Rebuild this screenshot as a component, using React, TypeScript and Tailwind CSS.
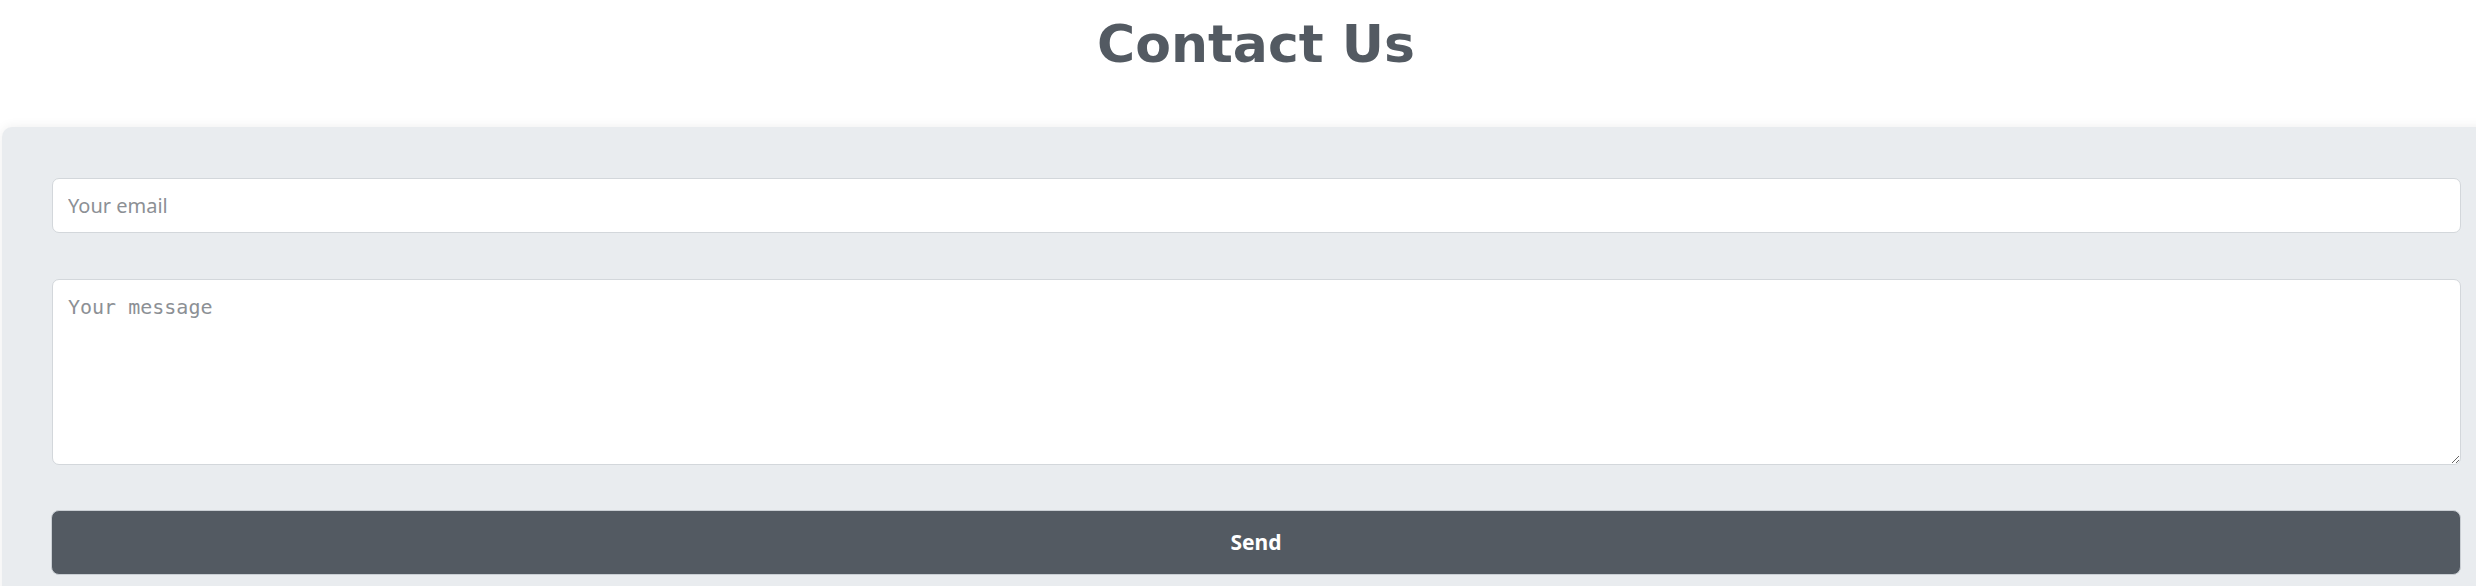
import React, { useState } from "react";

export default function App() {
  const [email, setEmail] = useState("");
  const [message, setMessage] = useState("");

  return (
    <div className="w-[2476px] h-[586px] overflow-hidden bg-white">
      <div className="w-[2512px]">
        <h1 className="pt-[18px] text-center text-[52px] leading-none font-bold text-[#535a62] font-['DejaVu_Sans',sans-serif]">
          Contact Us
        </h1>

        <form
          onSubmit={(e) => e.preventDefault()}
          className="mt-[57px] ml-[2px] flex flex-col rounded-[10px] bg-[#e9ecef] pt-[51px] pb-[40px] pl-[50px] pr-[49px] shadow-[0_0_12px_rgba(0,0,0,0.07)]"
        >
          <input
            type="email"
            value={email}
            onChange={(e) => setEmail(e.target.value)}
            placeholder="Your email"
            className="h-[55px] w-[2409px] rounded-[7px] border border-[#d3d7db] bg-white px-[15px] text-[20px] text-[#495057] placeholder:text-[#8c9095] font-['Noto_Sans',sans-serif] outline-none"
          />
          <textarea
            value={message}
            onChange={(e) => setMessage(e.target.value)}
            placeholder="Your message"
            className="mt-[46px] h-[186px] w-[2409px] rounded-[7px] border border-[#d3d7db] bg-white px-[15px] pt-[13px] pb-[10px] text-[20px] leading-[1.4] text-[#495057] placeholder:text-[#8c9095] font-['DejaVu_Sans_Mono',monospace] outline-none"
          />
          <button
            type="submit"
            className="mt-[45px] h-[65px] w-[2410px] -ml-[1px] rounded-[8px] border border-[#c9ced3] bg-[#535a62] text-[21px] font-bold text-white font-['Noto_Sans',sans-serif]"
          >
            Send
          </button>
        </form>
      </div>
    </div>
  );
}
